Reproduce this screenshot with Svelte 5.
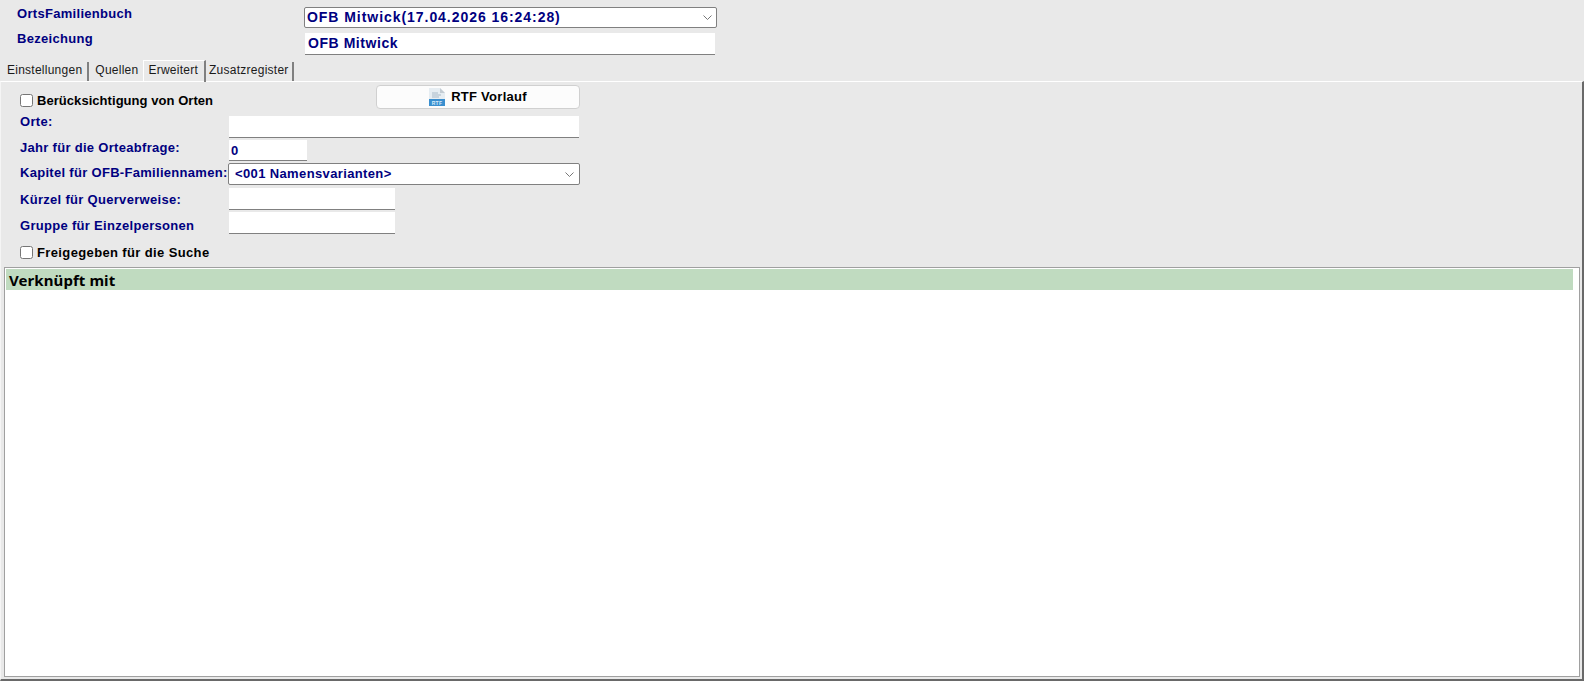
<script>
	const tabs = ['Einstellungen', 'Quellen', 'Erweitert', 'Zusatzregister']
	let active = 'Erweitert'
</script>

<div class="page">
	<div class="head">
		<div class="head-row">
			<span class="label head-label">OrtsFamilienbuch</span>
			<div class="select big">
				<span>OFB Mitwick(17.04.2026 16:24:28)</span>
				<svg width="9" height="5" viewBox="0 0 9 5"><path d="M.5.5l4 4 4-4" fill="none" stroke="#777"/></svg>
			</div>
		</div>
		<div class="head-row">
			<span class="label head-label second">Bezeichung</span>
			<input class="field big wide" value="OFB Mitwick" />
		</div>
	</div>

	<div class="tabs">
		{#each tabs as tab}
			<span class="tab" class:active={tab === active}>{tab}</span>
		{/each}
	</div>

	<div class="panel">
		<div class="form">
			<div class="row top">
				<label class="check"><input type="checkbox" />Berücksichtigung von Orten</label>
				<button class="rtf">
					<svg width="16" height="18" viewBox="0 0 16 18">
						<path d="M0 0h11l5 5v13H0z" fill="#e6edf2"/>
						<path d="M11 0l5 5h-5z" fill="#c3ccd3"/>
						<path d="M3 5h6M3 7h9M3 9h7" stroke="#a9bac8"/>
						<rect y="11" width="16" height="7" fill="#3a8fcf"/>
						<text x="8" y="16.6" text-anchor="middle" class="rtf-mark">RTF</text>
					</svg>
					<span class="rtf-text">RTF Vorlauf</span>
				</button>
			</div>
			<div class="row orte">
				<span class="label name">Orte:</span>
				<input class="field small long" />
			</div>
			<div class="row jahr">
				<span class="label name">Jahr für die Orteabfrage:</span>
				<input class="field small year" value="0" />
			</div>
			<div class="row kapitel">
				<span class="label name">Kapitel für OFB-Familiennamen:</span>
				<div class="select small-select">
					<span>&lt;001 Namensvarianten&gt;</span>
					<svg width="9" height="5" viewBox="0 0 9 5"><path d="M.5.5l4 4 4-4" fill="none" stroke="#777"/></svg>
				</div>
			</div>
			<div class="row kuerzel">
				<span class="label name">Kürzel für Querverweise:</span>
				<input class="field small short" />
			</div>
			<div class="row gruppe">
				<span class="label name">Gruppe für Einzelpersonen</span>
				<input class="field small short" />
			</div>
			<div class="row bottom">
				<label class="check"><input type="checkbox" />Freigegeben für die Suche</label>
			</div>
		</div>

		<div class="linked">
			<div class="linked-title">Verknüpft mit</div>
		</div>
	</div>
</div>

<style>
	:global(body) {
		margin: 0;
		background: #e9e9e9;
	}
	.page {
		height: 681px;
		display: flex;
		flex-direction: column;
		font-family: "Liberation Sans", Arial, sans-serif;
		overflow: hidden;
	}
	.head {
		height: 60px;
		padding-top: 7px;
		box-sizing: border-box;
	}
	.head-row {
		display: flex;
		height: 26px;
	}
	.label {
		color: #000080;
		font-weight: bold;
		font-size: 13px;
		letter-spacing: 0.3px;
	}
	.head-label {
		width: 287px;
		padding-left: 17px;
		line-height: 14px;
	}
	.second {
		margin-top: -1px;
	}
	.select {
		box-sizing: border-box;
		display: flex;
		align-items: center;
		justify-content: space-between;
		background: #fff;
		border: 1px solid #808080;
		border-radius: 2px;
		color: #000080;
		font-weight: bold;
	}
	.select span {
		margin-bottom: 2px;
	}
	.big {
		font-size: 14px;
		letter-spacing: 0.55px;
		font-weight: bold;
		color: #000080;
		font-family: inherit;
	}
	.select.big {
		width: 413px;
		height: 21px;
		padding: 0 4px 0 2px;
		letter-spacing: 0.95px;
	}
	.field {
		box-sizing: border-box;
		background: #fff;
		border: 0;
		border-bottom: 1px solid #808080;
		outline: 0;
		margin: 0;
		border-radius: 0;
		font-family: inherit;
	}
	.wide {
		width: 410px;
		height: 22px;
		padding: 0 0 2px 3px;
		margin-left: 1px;
	}
	.tabs {
		display: flex;
		height: 21px;
		padding-left: 1px;
		font-size: 12px;
		color: #1a1a1a;
		position: relative;
		z-index: 1;
	}
	.tab {
		box-sizing: border-box;
		padding: 1px 5px 0 6px;
		margin-top: 2px;
		height: 19px;
		letter-spacing: 0.25px;
		border-right: 2px solid #808080;
	}
	.tab:nth-child(2) {
		border-right: 0;
	}
	.tab:last-child {
		padding: 1px 3px 0 3px;
	}
	.tab.active {
		margin-top: 0;
		height: 22px;
		padding: 2px 6px 0 4px;
		border-top: 1px solid #fff;
		border-left: 1px solid #fff;
	}
	.panel {
		flex: 1;
		min-height: 0;
		display: flex;
		flex-direction: column;
		border-top: 1px solid #fff;
		border-left: 1px solid #f5f5f5;
		border-right: 2px solid #696969;
		border-bottom: 2px solid #696969;
	}
	.form {
		height: 185px;
		box-sizing: border-box;
		padding: 3px 0 0 19px;
	}
	.row {
		display: flex;
		align-items: center;
		height: 22px;
		margin-bottom: 2px;
	}
	.top {
		height: 24px;
		margin-bottom: 7px;
	}
	.jahr {
		height: 21px;
	}
	.kapitel {
		margin-bottom: 3px;
	}
	.orte .name {
		margin-bottom: 12px;
	}
	.jahr .name {
		margin-bottom: 7px;
	}
	.kapitel .name {
		margin-bottom: 4px;
	}
	.kuerzel .name {
		margin-top: 1px;
	}
	.gruppe .name {
		margin-top: 4px;
	}
	.name {
		width: 209px;
		flex: none;
		white-space: nowrap;
	}
	.small {
		height: 100%;
		font-size: 13px;
		font-weight: bold;
		color: #000080;
		letter-spacing: 0.3px;
		padding: 0 0 0 2px;
	}
	.long {
		width: 350px;
	}
	.year {
		width: 78px;
	}
	.short {
		width: 166px;
	}
	.select.small-select {
		width: 352px;
		height: 22px;
		margin-left: -1px;
		font-size: 13px;
		letter-spacing: 0.37px;
		padding: 0 5px 0 6px;
	}
	.check {
		display: flex;
		align-items: center;
		gap: 4px;
		font-size: 13px;
		font-weight: bold;
		color: #000;
		letter-spacing: 0.37px;
		width: 356px;
		flex: none;
	}
	.top .check {
		margin-top: 6px;
		letter-spacing: 0.05px;
	}
	.check input {
		margin: 0;
		width: 13px;
		height: 13px;
	}
	.bottom {
		height: 26px;
		margin-top: 5px;
	}
	.rtf {
		box-sizing: border-box;
		width: 204px;
		height: 24px;
		display: flex;
		align-items: center;
		justify-content: center;
		gap: 6px;
		background: #fcfcfc;
		border: 1px solid #d0d0d0;
		border-radius: 4px;
		font-family: inherit;
		font-size: 13px;
		font-weight: bold;
		letter-spacing: 0.27px;
		color: #000;
		padding: 0;
	}
	.rtf-text {
		margin-bottom: 2px;
	}
	.rtf-mark {
		font-family: "Liberation Sans", sans-serif;
		font-size: 5px;
		font-weight: bold;
		fill: #d8ecfa;
	}
	.linked {
		flex: 1;
		margin: 0 2px 2px 3px;
		background: #fff;
		border: 1px solid #a0a0a0;
		padding: 1px 6px 1px 1px;
	}
	.linked-title {
		height: 21px;
		line-height: 22px;
		background: #c0dbc0;
		padding-left: 3px;
		font-family: "Noto Sans", sans-serif;
		font-weight: bold;
		font-size: 15px;
		letter-spacing: 0.08px;
		color: #000;
	}
</style>
